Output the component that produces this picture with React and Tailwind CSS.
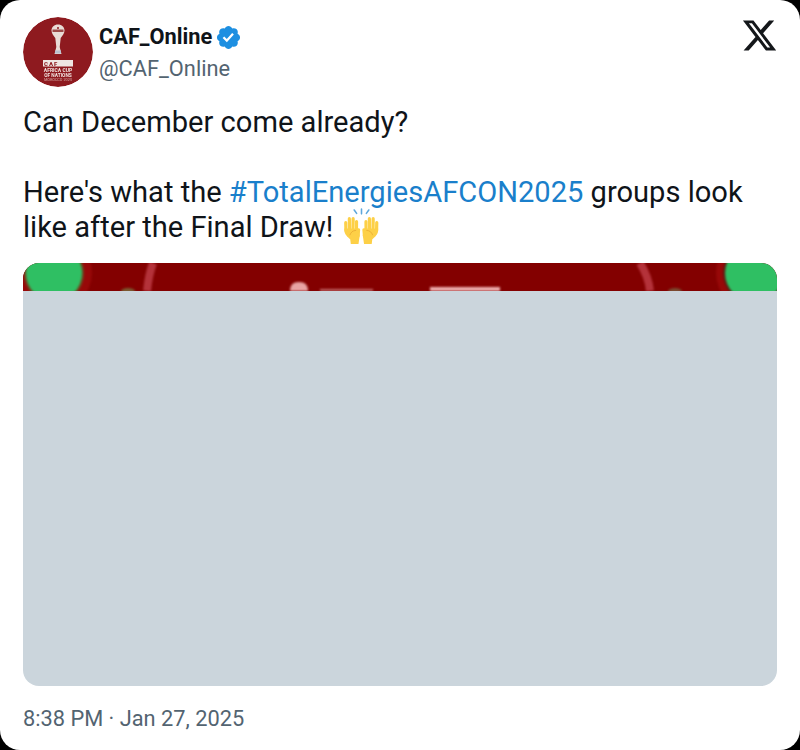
function Avatar() {
  return (
    <svg viewBox="0 0 70 70" className="w-[70px] h-[70px] shrink-0 rounded-full">
      <circle cx="35" cy="35" r="35" fill="#8e1a1f" />
      <g className="blur-[0.3px]">
        {/* trophy */}
        <path d="M35 7.500c3.800 0 6.500 2.600 6.500 6 0 3.500-2.500 5.500-3.800 7.500l-1 9 1.800 7h-7l1.800-7-1-9c-1.300-2-3.800-4-3.800-7.500 0-3.400 2.700-6 6.500-6z" fill="#e9dcd6" />
        <path d="M29.500 12.500h11v2.500h-11z" fill="#9c4a48" />
        <circle cx="35" cy="11" r="1" fill="#8e1a1f" />
        <rect x="32" y="33.500" width="6" height="3" fill="#b9c2d0" />
        {/* caf plate */}
        <rect x="20" y="43" width="30" height="6.500" fill="#eee6e2" />
        <text x="21" y="48.600" fontFamily="Roboto, sans-serif" fontWeight="900" fontSize="6" letterSpacing="1" fill="#8e1a1f">CAF</text>
        <text x="35" y="54.500" textAnchor="middle" fontFamily="Roboto, sans-serif" fontWeight="700" fontSize="5" fill="#f3e6e2">AFRICA CUP</text>
        <text x="35" y="59.500" textAnchor="middle" fontFamily="Roboto, sans-serif" fontWeight="700" fontSize="4.800" fill="#f3e6e2">OF NATIONS</text>
        <text x="35" y="64" textAnchor="middle" fontFamily="Roboto, sans-serif" fontWeight="500" fontSize="3.800" fill="#c98f8c">MOROCCO 2025</text>
      </g>
    </svg>
  );
}

function Verified() {
  return (
    <svg viewBox="0 0 24 24" className="w-[27px] h-[27px] shrink-0">
      <path fill="#fff" d="M6 7h12v10H6z" />
      <path fill="#1d8fe1" d="M22.25 12c0-1.43-.88-2.67-2.19-3.34.46-1.39.2-2.9-.81-3.91s-2.52-1.27-3.91-.81c-.66-1.31-1.91-2.19-3.34-2.19s-2.67.88-3.33 2.19c-1.4-.46-2.91-.2-3.92.81s-1.26 2.52-.8 3.91c-1.31.67-2.2 1.91-2.2 3.34s.89 2.67 2.2 3.34c-.46 1.39-.21 2.9.8 3.91s2.52 1.26 3.91.81c.67 1.31 1.91 2.19 3.34 2.19s2.68-.88 3.34-2.19c1.39.45 2.9.2 3.91-.81s1.27-2.52.81-3.91c1.31-.67 2.19-1.91 2.19-3.34zm-11.71 4.2L6.8 12.46l1.41-1.42 2.26 2.26 4.8-5.23 1.47 1.36-6.2 6.77z" />
    </svg>
  );
}

function XLogo() {
  return (
    <svg viewBox="0 0 24 24" className="w-[37px] h-[37px] shrink-0">
      <path fill="#14171a" d="M18.244 2.25h3.308l-7.227 8.26 8.502 11.24H16.17l-5.214-6.817L4.99 21.75H1.68l7.73-8.835L1.254 2.25H8.08l4.713 6.231zm-1.161 17.52h1.833L7.084 4.126H5.117z" />
    </svg>
  );
}

function Hand() {
  return (
    <g>
      <g stroke="#fdd047" strokeWidth="3.300" strokeLinecap="round" fill="none">
        <path d="M2 22L1.800 14" />
        <path d="M5.600 20L5.500 10" />
        <path d="M9.200 20L9.400 10" />
        <path d="M12.800 21L12.900 13" />
        <path d="M14.400 28L15 21.500" />
      </g>
      <path fill="#fdd047" d="M.4 20h14l1.800 7-1.300 9H7l-.6-5C4 29 .4 26 .4 22z" />
      <path fill="none" stroke="#e8a932" strokeWidth=".8" d="M6 27c1-3 3-5 6.500-5" />
    </g>
  );
}

function Hands() {
  return (
    <svg viewBox="0 0 36 36" className="inline-block w-[35px] h-[35px] align-top mt-[-1px] ml-[3px] overflow-visible">
      <g stroke="#5da7dc" strokeWidth="1.600" strokeLinecap="round">
        <path d="M10.500 1l2.500 3.500" />
        <path d="M18 0v5" />
        <path d="M25.500 1L23 4.500" />
      </g>
      <Hand />
      <g transform="translate(35.500 0) scale(-1 1)">
        <Hand />
      </g>
    </svg>
  );
}

function RedStrip() {
  return (
    <svg viewBox="0 0 754 28" preserveAspectRatio="none" className="block w-full h-[28px]">
      <rect width="754" height="28" fill="#830000" />
      <g className="blur-[1px]">
        <circle cx="31" cy="10" r="38" fill="#970808" />
        <circle cx="731" cy="10" r="38" fill="#970808" />
        <circle cx="31" cy="10" r="30" fill="#6a4a20" />
        <circle cx="31" cy="10" r="28" fill="#2fbf63" />
        <circle cx="731" cy="10" r="31" fill="#5a1a10" />
        <circle cx="731" cy="10" r="29" fill="#2fbf63" />
        <path d="M130 0 C127 8 125 18 124 28" stroke="#b4323a" strokeWidth="8" fill="none" />
        <path d="M617 0 C622 8 626 18 627 28" stroke="#b4323a" strokeWidth="8" fill="none" />
        <ellipse cx="105" cy="28" rx="7" ry="3" fill="#7a5a30" />
        <ellipse cx="652" cy="28" rx="7" ry="3" fill="#7a4a30" />
        <path d="M267 28c0-6 3-9 9-9s9 3 9 9z" fill="#e8a4a4" />
        <rect x="297" y="26" width="53" height="2" fill="#c46a6a" />
        <rect x="407" y="24" width="70" height="4" fill="#eeb0b0" />
      </g>
    </svg>
  );
}

export default function App() {
  return (
    <div className="w-[800px] h-[750px] bg-black">
      <div className="w-full h-full bg-white rounded-[20px] px-[23px] pt-[17px] font-['Roboto',sans-serif] text-[#0f1419]">
        <div className="flex items-start">
          <Avatar />
          <div className="ml-[6px] flex flex-col">
            <div className="flex items-center h-[40px]">
              <span className="text-[21.8px] font-bold">CAF_Online</span>
              <span className="ml-[3px]"><Verified /></span>
            </div>
            <span className="mt-[-1px] text-[21.8px] leading-[26px] text-[#536471]">@CAF_Online</span>
          </div>
          <div className="ml-auto mr-[-1px]"><XLogo /></div>
        </div>

        <p className="mt-[18px] text-[29.1px] leading-[35px]">Can December come already?</p>
        <p className="mt-[35px] text-[29.1px] leading-[35px]">
          Here's what the <span className="text-[#1a7fcb]">#TotalEnergiesAFCON2025</span> groups look like after the Final Draw! <Hands />
        </p>

        <div className="mt-[18px] h-[423px] rounded-[16px] overflow-hidden bg-[#cbd5dc]">
          <RedStrip />
        </div>

        <p className="mt-[20px] text-[21.8px] leading-[26px] text-[#536471]">8:38 PM · Jan 27, 2025</p>
      </div>
    </div>
  );
}
